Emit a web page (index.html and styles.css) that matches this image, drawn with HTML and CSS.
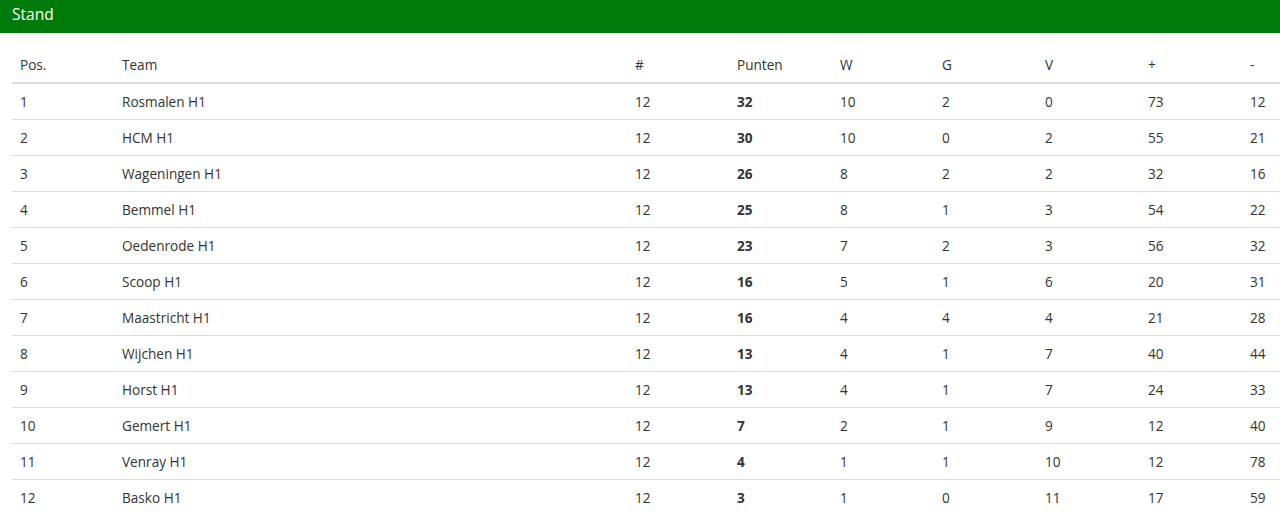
FILE: index.html
```html
<!DOCTYPE html>
<html lang="nl">
<head>
<meta charset="utf-8">
<title>Stand</title>
<link rel="stylesheet" href="styles.css">
</head>
<body>
<div class="panel">
  <div class="panel-heading">Stand</div>
  <div class="panel-body">
    <table class="standings">
      <colgroup>
        <col class="c-pos"><col class="c-team"><col class="c-num"><col class="c-wide"><col class="c-num"><col class="c-wide"><col class="c-wide"><col class="c-num"><col class="c-last">
      </colgroup>
      <thead>
        <tr><th>Pos.</th><th>Team</th><th>#</th><th>Punten</th><th>W</th><th>G</th><th>V</th><th>+</th><th>-</th></tr>
      </thead>
      <tbody>
        <tr><td>1</td><td>Rosmalen H1</td><td>12</td><td class="pts">32</td><td>10</td><td>2</td><td>0</td><td>73</td><td>12</td></tr>
        <tr><td>2</td><td>HCM H1</td><td>12</td><td class="pts">30</td><td>10</td><td>0</td><td>2</td><td>55</td><td>21</td></tr>
        <tr><td>3</td><td>Wageningen H1</td><td>12</td><td class="pts">26</td><td>8</td><td>2</td><td>2</td><td>32</td><td>16</td></tr>
        <tr><td>4</td><td>Bemmel H1</td><td>12</td><td class="pts">25</td><td>8</td><td>1</td><td>3</td><td>54</td><td>22</td></tr>
        <tr><td>5</td><td>Oedenrode H1</td><td>12</td><td class="pts">23</td><td>7</td><td>2</td><td>3</td><td>56</td><td>32</td></tr>
        <tr><td>6</td><td>Scoop H1</td><td>12</td><td class="pts">16</td><td>5</td><td>1</td><td>6</td><td>20</td><td>31</td></tr>
        <tr><td>7</td><td>Maastricht H1</td><td>12</td><td class="pts">16</td><td>4</td><td>4</td><td>4</td><td>21</td><td>28</td></tr>
        <tr><td>8</td><td>Wijchen H1</td><td>12</td><td class="pts">13</td><td>4</td><td>1</td><td>7</td><td>40</td><td>44</td></tr>
        <tr><td>9</td><td>Horst H1</td><td>12</td><td class="pts">13</td><td>4</td><td>1</td><td>7</td><td>24</td><td>33</td></tr>
        <tr><td>10</td><td>Gemert H1</td><td>12</td><td class="pts">7</td><td>2</td><td>1</td><td>9</td><td>12</td><td>40</td></tr>
        <tr><td>11</td><td>Venray H1</td><td>12</td><td class="pts">4</td><td>1</td><td>1</td><td>10</td><td>12</td><td>78</td></tr>
        <tr><td>12</td><td>Basko H1</td><td>12</td><td class="pts">3</td><td>1</td><td>0</td><td>11</td><td>17</td><td>59</td></tr>
      </tbody>
    </table>
  </div>
</div>
</body>
</html>
```
FILE: styles.css
```css
html, body {
  margin: 0;
  padding: 0;
  background: #fff;
  overflow: hidden;
}
body {
  font-family: "Open Sans", "Liberation Sans", sans-serif;
  font-size: 13.6px;
  line-height: 19px;
  color: #333;
}
.panel-heading {
  background: #007a0a;
  color: #fff;
  font-size: 15.5px;
  line-height: 20px;
  height: 33px;
  box-sizing: border-box;
  padding: 4px 12px 9px;
}
.panel-body {
  padding: 14px 0 0 12px;
}
.standings {
  border-collapse: collapse;
  table-layout: fixed;
  width: 100%;
}
.c-pos { width: 102px; }
.c-team { width: 513px; }
.c-num { width: 102px; }
.c-wide { width: 103px; }
.standings th,
.standings td {
  text-align: left;
  padding: 8px;
  font-weight: normal;
  white-space: nowrap;
}
.standings th {
  border-bottom: 2px solid #ddd;
}
.standings td {
  border-top: 1px solid #ddd;
}
.standings tbody tr:first-child td {
  border-top: 0;
}
.standings td.pts {
  font-weight: bold;
}
```
